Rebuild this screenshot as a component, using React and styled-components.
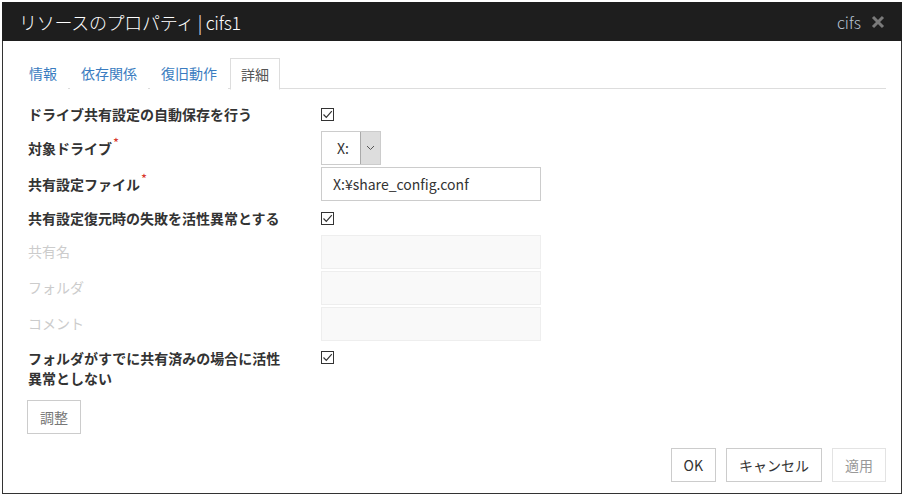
import styled, { createGlobalStyle } from "styled-components";

const Global = createGlobalStyle`
  html, body { margin: 0; padding: 0; background: #fff; }
  body { font-family: "Noto Sans CJK JP", "Noto Sans", sans-serif; color: #333; }
  * { box-sizing: border-box; }
`;

const Dialog = styled.div`
  margin: 2px 0 0 2px;
  width: 900px;
  height: 492px;
  border: 1px solid #333;
  border-top: none;
  display: flex;
  flex-direction: column;
  background: #fff;
`;

const Header = styled.div`
  height: 39px;
  background: #1e1e1e;
  margin: 0 -1px;
  padding: 0 17px 0 17px;
  display: flex;
  align-items: center;
  justify-content: space-between;
`;

const Title = styled.div`
  color: #fff;
  font-size: 18px;
  font-weight: 300;
  letter-spacing: -0.3px;
`;

const HeaderRight = styled.div`
  display: flex;
  align-items: center;
  gap: 10px;
  color: #b8c4d4;
  font-size: 16px;
  font-weight: 300;
`;

const Body = styled.div`
  flex: 1;
  padding: 16px 15px 0;
  display: flex;
  flex-direction: column;
`;

const Tabs = styled.div`
  display: flex;
  border-bottom: 1px solid #ddd;
  height: 32px;
`;

const Tab = styled.div`
  height: 32px;
  padding: 0 10px;
  margin-right: 2px;
  border: 1px solid ${(p) => (p.$active ? "#ddd" : "transparent")};
  border-bottom-color: ${(p) => (p.$active ? "#fff" : "transparent")};
  background: #fff;
  color: ${(p) => (p.$active ? "#555" : "#3a7cc0")};
  font-size: 14px;
  display: flex;
  align-items: center;
  position: relative;
  top: ${(p) => (p.$active ? "1px" : "0")};
`;

const Form = styled.div`
  padding: 10px 10px 0;
  display: flex;
  flex-direction: column;
  gap: 2px;
`;

const Row = styled.div`
  display: flex;
  align-items: ${(p) => (p.$top ? "flex-start" : "center")};
  min-height: ${(p) => (p.$check ? "30px" : "34px")};
  padding-top: ${(p) => (p.$top ? "5px" : "0")};
`;

const Label = styled.div`
  width: 293px;
  flex-shrink: 0;
  padding-right: 30px;
  font-size: 14px;
  line-height: 20px;
  font-weight: ${(p) => (p.$disabled ? 400 : 700)};
  color: ${(p) => (p.$disabled ? "#ccc" : "#333")};
  margin-top: ${(p) => (p.$disabled ? "-3px" : "0")};
`;

const Req = styled.span`
  color: #d9352b;
  font-size: 13px;
  font-weight: 400;
  position: relative;
  top: -6px;
  margin-left: 1px;
`;

const Check = styled.span`
  width: 13px;
  height: 13px;
  border: 1px solid #333;
  display: inline-flex;
  align-items: center;
  justify-content: center;
  margin-top: ${(p) => (p.$top ? "3px" : "0")};
  background: #fff;
`;

const Select = styled.div`
  width: 60px;
  height: 34px;
  border: 1px solid #ccc;
  display: flex;
`;

const SelectValue = styled.div`
  flex: 1;
  font-size: 14px;
  padding-left: 4px;
  display: flex;
  align-items: center;
  justify-content: center;
  color: #333;
`;

const SelectArrow = styled.div`
  width: 20px;
  background: #ddd;
  border-left: 1px solid #aaa;
  display: flex;
  align-items: center;
  justify-content: center;
`;

const Input = styled.div`
  width: 220px;
  height: 34px;
  border: 1px solid ${(p) => (p.$disabled ? "#eee" : "#ccc")};
  background: ${(p) => (p.$disabled ? "#f9f9f9" : "#fff")};
  padding: 0 11px;
  font-size: 14px;
  display: flex;
  align-items: center;
  color: #333;
`;

const Button = styled.button`
  height: 34px;
  padding: 0 12px;
  border: 1px solid ${(p) => (p.disabled ? "#e3e3e3" : "#ccc")};
  background: #fff;
  color: ${(p) => (p.disabled ? "#999" : "#333")};
  font-family: inherit;
  font-size: 14px;
  cursor: pointer;
`;

const AdjustButton = styled(Button)`
  align-self: flex-start;
  margin-top: 10px;
  margin-left: -1px;
  color: #777;
`;

const Footer = styled.div`
  margin-top: auto;
  padding: 0 15px 11px;
  display: flex;
  justify-content: flex-end;
  gap: 10px;
`;

const CheckMark = () => (
  <svg width="11" height="11" viewBox="0 0 11 11">
    <path d="M1.5 5.5 L4.3 8.3 L9.8 2.2" fill="none" stroke="#333" strokeWidth="1.2" />
  </svg>
);

const CloseIcon = () => (
  <svg width="14" height="14" viewBox="0 0 14 14">
    <path d="M2 2 L12 12 M12 2 L2 12" stroke="#7a7a7a" strokeWidth="3" strokeLinecap="butt" />
  </svg>
);

const Chevron = () => (
  <svg width="9" height="6" viewBox="0 0 9 6">
    <path d="M1 1 L4.5 4.5 L8 1" fill="none" stroke="#555" strokeWidth="1" />
  </svg>
);

export default function App() {
  return (
    <>
      <Global />
      <Dialog>
        <Header>
          <Title>リソースのプロパティ | cifs1</Title>
          <HeaderRight>
            cifs
            <CloseIcon />
          </HeaderRight>
        </Header>
        <Body>
          <Tabs>
            <Tab>情報</Tab>
            <Tab>依存関係</Tab>
            <Tab>復旧動作</Tab>
            <Tab $active>詳細</Tab>
          </Tabs>
          <Form>
            <Row $check>
              <Label>ドライブ共有設定の自動保存を行う</Label>
              <Check><CheckMark /></Check>
            </Row>
            <Row>
              <Label>対象ドライブ<Req>*</Req></Label>
              <Select>
                <SelectValue>X:</SelectValue>
                <SelectArrow><Chevron /></SelectArrow>
              </Select>
            </Row>
            <Row>
              <Label>共有設定ファイル<Req>*</Req></Label>
              <Input>X:¥share_config.conf</Input>
            </Row>
            <Row $check>
              <Label>共有設定復元時の失敗を活性異常とする</Label>
              <Check><CheckMark /></Check>
            </Row>
            <Row>
              <Label $disabled>共有名</Label>
              <Input $disabled />
            </Row>
            <Row>
              <Label $disabled>フォルダ</Label>
              <Input $disabled />
            </Row>
            <Row>
              <Label $disabled>コメント</Label>
              <Input $disabled />
            </Row>
            <Row $top>
              <Label>フォルダがすでに共有済みの場合に活性異常としない</Label>
              <Check $top><CheckMark /></Check>
            </Row>
            <AdjustButton>調整</AdjustButton>
          </Form>
        </Body>
        <Footer>
          <Button>OK</Button>
          <Button>キャンセル</Button>
          <Button disabled>適用</Button>
        </Footer>
      </Dialog>
    </>
  );
}
